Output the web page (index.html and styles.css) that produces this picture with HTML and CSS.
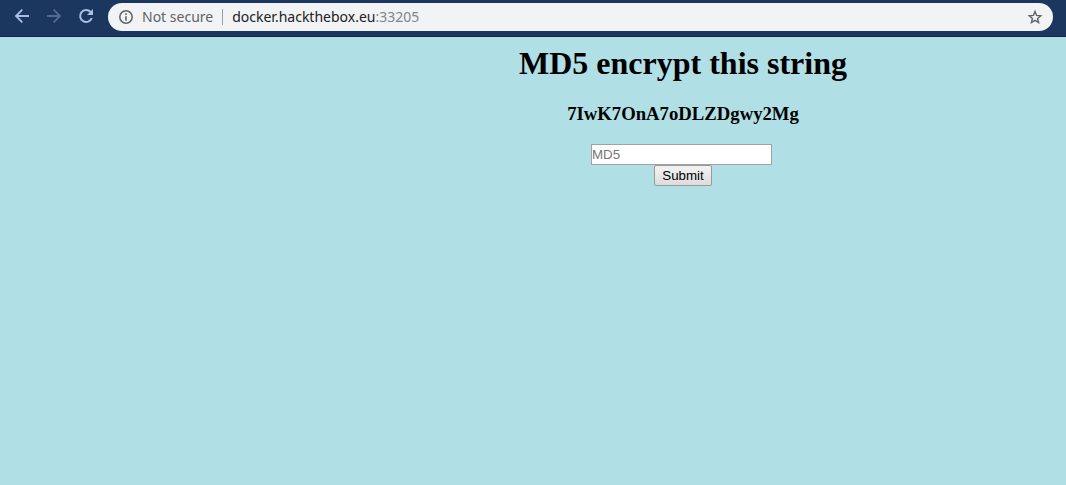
FILE: index.html
```html
<!DOCTYPE html>
<html lang="en">
<head>
<meta charset="utf-8">
<title>MD5 encrypt this string</title>
<link rel="stylesheet" href="styles.css">
</head>
<body>
<header class="toolbar">
  <nav class="nav">
    <button class="icon-button" type="button" aria-label="Back">
      <svg class="icon" viewBox="0 0 20 20"><path d="M17 10H4.500M10.300 3.700 4 10l6.300 6.300" fill="none" stroke="currentColor" stroke-width="1.800"/></svg>
    </button>
    <button class="icon-button" type="button" aria-label="Forward" disabled>
      <svg class="icon" viewBox="0 0 20 20"><path d="M3 10h12.500M9.700 3.700 16 10l-6.300 6.300" fill="none" stroke="currentColor" stroke-width="1.800"/></svg>
    </button>
    <button class="icon-button" type="button" aria-label="Reload">
      <svg class="icon" viewBox="0 0 20 20"><path d="M15.800 12A6 6 0 1 1 14.500 5.800L16 7.300" fill="none" stroke="currentColor" stroke-width="2"/><path d="M17 3v6h-6z" fill="currentColor"/></svg>
    </button>
  </nav>
  <div class="address">
    <svg class="info" viewBox="0 0 16 16"><circle cx="8" cy="8" r="6.200" fill="none" stroke="currentColor" stroke-width="1.500"/><path d="M7.200 4.300h1.600v1.600H7.200zM7.200 7.200h1.600v4.600H7.200z" fill="currentColor"/></svg>
    <span class="security">Not secure</span>
    <span class="url"><span class="host">docker.hackthebox.eu</span>:33205</span>
    <button class="star" type="button" aria-label="Bookmark this page">
      <svg class="info" viewBox="0 0 16 16"><path d="M8 2.400l1.600 4 4.200.4-3.200 2.700 1 4.100L8 11.400l-3.600 2.200 1-4.100-3.200-2.700 4.200-.4z" fill="none" stroke="currentColor" stroke-width="1.400"/></svg>
    </button>
  </div>
</header>
<main class="page">
  <h1 class="title">MD5 encrypt this string</h1>
  <h3 class="token">7IwK7OnA7oDLZDgwy2Mg</h3>
  <form class="form">
    <input class="field" type="text" placeholder="MD5" aria-label="MD5">
    <button class="submit" type="submit">Submit</button>
  </form>
</main>
</body>
</html>
```
FILE: styles.css
```css
* {
  box-sizing: border-box;
}

body {
  margin: 0;
  min-height: 100vh;
  background: #b0e0e6;
  color: #000;
  font-family: "Liberation Serif", "Times New Roman", serif;
}

.toolbar {
  display: flex;
  align-items: center;
  gap: 12px;
  padding: 3px 13px 5px 12px;
  background: #1b365f;
  border-bottom: 1px solid #122746;
}

.nav {
  display: flex;
  gap: 12px;
  padding-bottom: 2px;
}

.icon-button,
.star {
  display: flex;
  padding: 0;
  border: 0;
  background: none;
  color: #aabfe4;
}

.icon-button:disabled {
  color: #536b93;
}

.icon {
  width: 20px;
  height: 20px;
}

.address {
  display: flex;
  flex: 1;
  align-items: center;
  height: 28px;
  padding: 0 10px;
  border-radius: 14px;
  background: #f1f3f4;
  color: #5f6368;
  font: 14px/20px "Noto Sans", sans-serif;
}

.info {
  width: 16px;
  height: 16px;
}

.security {
  margin-left: 8px;
  padding-right: 9px;
}

.url {
  display: flex;
  align-items: center;
  color: #80868b;
}

.url::before {
  content: "";
  height: 16px;
  margin-right: 9px;
  border-left: 1px solid #9b9ea2;
}

.host {
  color: #202124;
}

.star {
  margin-left: auto;
  color: #5f6368;
}

.page {
  margin-left: 300px;
  padding-top: 8px;
  text-align: center;
}

.title {
  margin: 0;
  font-size: 32px;
}

.token {
  margin: 21px 0 19px;
}

.form {
  display: flex;
  flex-direction: column;
  align-items: center;
}

.field {
  width: 181px;
  height: 21px;
  margin-right: 3px;
  padding: 0;
  border: 1px solid #a2a2a2;
  background: #fff;
  font-family: "Liberation Sans", Arial, sans-serif;
}

.field::placeholder {
  color: #757575;
}

.submit {
  width: 58px;
  height: 21px;
  padding: 0;
  border: 1px solid #9b9898;
  border-radius: 2px;
  background: linear-gradient(#f3f3f3, #dddddd);
  color: #000;
  font-family: "Liberation Sans", Arial, sans-serif;
}
```
